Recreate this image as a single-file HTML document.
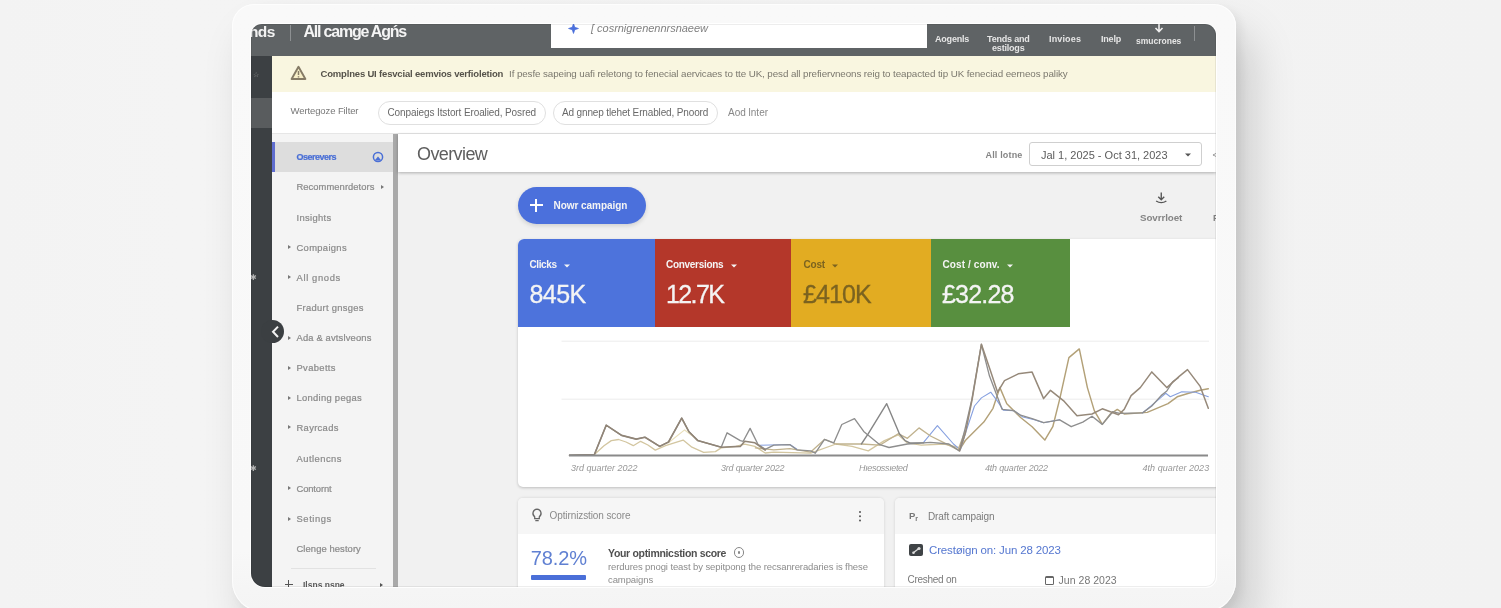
<!DOCTYPE html>
<html lang="en">
<head>
<meta charset="utf-8">
<title>Ads overview on tablet</title>
<style>
*{box-sizing:border-box;margin:0;padding:0}
html,body{width:1501px;height:608px;overflow:hidden}
body{position:relative;background:#f3f3f3;font-family:"Liberation Sans",sans-serif;color:#777;-webkit-font-smoothing:antialiased}
.abs{position:absolute}
.t{position:absolute;white-space:nowrap;line-height:1;transform:translateY(-50%)}
#bgl{left:0;top:0;width:1501px;height:608px;background:linear-gradient(90deg,#f3f3f3 0,#f4f4f4 12%,#f3f3f3 60%,#f2f2f2 100%)}
#frame{left:232px;top:4px;width:1004px;height:608px;border-radius:22px 22px 31px 31px;background:linear-gradient(180deg,#f9f9f9 0,#f8f8f8 90%,#f5f5f5 96%,#f4f4f4 100%);
 box-shadow:16px 30px 44px rgba(0,0,0,.17),5px 4px 10px rgba(0,0,0,.06),inset 0 0 0 1px rgba(255,255,255,.7)}
#screen{left:251px;top:24px;width:965px;height:563px;border-radius:11px 11px 10px 14px;overflow:hidden;background:#f1f1f1;box-shadow:0 0 0 1px rgba(255,255,255,.9)}
#screen::after{content:"";position:absolute;inset:0;border-radius:inherit;box-shadow:inset 0 0 0 1px rgba(0,0,0,.07);pointer-events:none}
#in{position:absolute;left:-251px;top:-24px;width:1501px;height:608px;filter:blur(.45px)}
/* top bar */
#top{left:251px;top:24px;width:965px;height:32px;background:#5f6365}
#search{left:551px;top:24px;width:376px;height:23.5px;background:#fff}
.nv{color:#e6e6e6;font-weight:bold;font-size:9px;text-align:center;letter-spacing:-.2px}
#rail{left:251px;top:56px;width:21px;height:531px;background:#3c4043}
#railsel{left:251px;top:98px;width:21px;height:30px;background:#595c5e}
#banner{left:272px;top:56px;width:944px;height:36px;background:#f9f6e0}
#filter{left:272px;top:92px;width:944px;height:42px;background:#fff;border-bottom:1px solid #e6e6e6}
.chip{position:absolute;top:101px;height:24px;border:1px solid #e0e0e0;border-radius:12px;background:#fff}
#nav{left:272px;top:134px;width:121px;height:453px;background:#f4f4f4}
#navsel{left:272px;top:142px;width:121px;height:30px;background:#dddddd;border-left:3px solid #5f6dcf}
#sep{left:392.5px;top:134px;width:5.5px;height:453px;background:#a9a9a9}
.ni{font-size:9.4px;color:#8b8b8b;left:296.5px;letter-spacing:-.1px;-webkit-text-stroke:.22px currentColor}
.ar{position:absolute;width:0;height:0;border-left:3.5px solid #777;border-top:2.5px solid transparent;border-bottom:2.5px solid transparent;transform:translateY(-50%)}
#head{left:398px;top:134px;width:818px;height:38px;background:#fff;box-shadow:0 1px 3px rgba(0,0,0,.28)}
#btn{left:517.5px;top:187px;width:128px;height:36.5px;border-radius:19px;background:#4b70dc;box-shadow:0 2px 4px rgba(60,64,67,.18)}
#card{left:517.5px;top:239px;width:702px;height:247.5px;background:#fff;border-radius:5px;box-shadow:0 1px 3px rgba(0,0,0,.22)}
.tile{position:absolute;top:239px;height:87.5px}
.tl{font-size:10px;font-weight:bold;color:#f4f4f4;letter-spacing:-.2px}
.tv{font-size:25px;color:#f4f4f4;letter-spacing:-.55px;-webkit-text-stroke:.3px currentColor}
.dn{position:absolute;width:0;height:0;border-top:3.5px solid #f4f4f4;border-left:3.5px solid transparent;border-right:3.5px solid transparent;transform:translate(-50%,-50%)}
.ax{font-size:9px;color:#979797;font-style:italic;letter-spacing:-.2px}
.bc{position:absolute;top:497.5px;height:100px;background:#fff;border-radius:5px;box-shadow:0 0 3px rgba(0,0,0,.14);overflow:hidden}
.bch{position:absolute;left:0;top:0;right:0;height:36px;background:#f6f6f6}
</style>
</head>
<body>
<div id="bgl" class="abs"></div>
<div id="frame" class="abs"></div>
<div id="screen" class="abs"><div id="in">

<!-- top bar -->
<div id="top" class="abs"></div>
<div class="t" style="left:249px;top:32px;font-size:15.5px;font-weight:bold;color:#f2f2f2;letter-spacing:-.6px">nds</div>
<div class="abs" style="left:290px;top:25px;width:1px;height:16px;background:#8d9092"></div>
<div class="t" id="ttl" style="left:303.5px;top:32.4px;font-size:16px;font-weight:bold;color:#f4f4f4;letter-spacing:-1.21px">All camge Agńs</div>
<div id="search" class="abs"></div>
<svg class="abs" style="left:568px;top:23.2px" width="11" height="11" viewBox="0 0 13 13"><path d="M6.5 0.6 L8 5 L12.4 6.5 L8 8 L6.5 12.4 L5 8 L0.6 6.5 L5 5 Z" fill="#4a6fdc" stroke="#4a6fdc" stroke-width=".8" stroke-linejoin="round"/></svg>
<div class="t" id="sx" style="left:591px;top:27.8px;font-size:11px;font-style:italic;color:#808080;letter-spacing:-.02px">[ cosrnigrenennrsnaeew</div>
<div class="t nv" style="left:935px;top:38.5px">Aogenls</div>
<div class="t nv" style="left:987px;top:43.5px;line-height:9.5px;transform:translateY(-50%)">Tends and<br>estilogs</div>
<div class="t nv" style="left:1049px;top:38.5px;letter-spacing:.15px">Invioes</div>
<div class="t nv" style="left:1101px;top:38.5px">Inelp</div>
<svg class="abs" style="left:1153px;top:22px" width="12" height="12" viewBox="0 0 12 12"><path d="M6 0 V9 M2.5 6 L6 9.5 L9.5 6" fill="none" stroke="#eee" stroke-width="1.6"/></svg>
<div class="t nv" style="left:1136px;top:41px;font-size:8.5px;letter-spacing:0">smucrones</div>
<div class="abs" style="left:1193.5px;top:26px;width:1px;height:15px;background:#8d9092"></div>

<!-- rail -->
<div id="rail" class="abs"></div>
<div id="railsel" class="abs"></div>
<div class="t" style="left:252.5px;top:74px;font-size:7px;color:#9a9a9a">☆</div>
<div class="t" style="left:249.5px;top:278px;font-size:8px;color:#b4b4b4">✱</div>
<div class="t" style="left:249.5px;top:469px;font-size:8px;color:#b4b4b4">✱</div>

<!-- banner -->
<div id="banner" class="abs"></div>
<svg class="abs" style="left:289.5px;top:65px" width="17" height="16" viewBox="0 0 17 16"><path d="M8.5 1.8 L15.4 14 H1.6 Z" fill="#f7efc8" stroke="#857b66" stroke-width="1.9" stroke-linejoin="round"/><path d="M8.5 6 V10 M8.5 11.2 V12.6" stroke="#857b66" stroke-width="1.5"/></svg>
<div class="t" id="bb" style="left:320.5px;top:73.5px;font-size:9.5px;font-weight:bold;color:#55524a;letter-spacing:-.18px">Complnes UI fesvcial eemvios verfioletion</div>
<div class="t" id="br" style="left:509px;top:73.5px;font-size:9.8px;color:#7b786e;letter-spacing:-.09px">If pesfe sapeing uafi reletong to fenecial aervicaes to tte UK, pesd all prefiervneons reig to teapacted tip UK feneciad eerneos paliky</div>

<!-- filter row -->
<div id="filter" class="abs"></div>
<div class="t" id="fl" style="left:290.5px;top:110.5px;font-size:9.5px;color:#777;letter-spacing:-.1px">Wertegoze Filter</div>
<div class="chip" style="left:377.5px;width:168.5px"></div>
<div class="t" id="c1" style="left:387.5px;top:113px;font-size:10px;color:#696969;letter-spacing:-.11px">Conpaiegs Itstort Eroalied, Posred</div>
<div class="chip" style="left:553px;width:165px"></div>
<div class="t" id="c2" style="left:562px;top:113px;font-size:10px;color:#696969;letter-spacing:-.14px">Ad gnnep tlehet Ernabled, Pnoord</div>
<div class="t" id="af" style="left:728px;top:112.5px;font-size:10px;color:#888">Aod lnter</div>

<!-- left nav -->
<div id="nav" class="abs"></div>
<div id="navsel" class="abs"></div>
<div id="sep" class="abs"></div>
<div class="t ni" id="n0" style="top:157px;color:#4a6fd6;font-weight:bold;font-size:9px;letter-spacing:-.49px">Oserevers</div>
<svg class="abs" style="left:372px;top:150.5px" width="12" height="12" viewBox="0 0 12 12"><circle cx="6" cy="6" r="4.6" fill="none" stroke="#4a6fd6" stroke-width="1.5"/><path d="M2.6 9.5 L6 5.4 L9.4 9.5 Z" fill="#4a6fd6"/></svg>
<div class="t ni" id="n1" style="top:187px;letter-spacing:0.058px">Recommenrdetors</div><div class="ar" style="left:381px;top:187px"></div>
<div class="t ni" id="n2" style="top:217.5px;letter-spacing:0.336px">Insights</div>
<div class="ar" style="left:287.5px;top:247px"></div><div class="t ni" id="n3" style="top:247.5px;letter-spacing:0.331px">Compaigns</div>
<div class="ar" style="left:287.5px;top:277px"></div><div class="t ni" id="n4" style="top:277.5px;letter-spacing:0.647px">All gnods</div>
<div class="t ni" id="n5" style="top:307.5px;letter-spacing:0.296px">Fradurt gnsges</div>
<div class="ar" style="left:287.5px;top:338px"></div><div class="t ni" id="n6" style="top:338px;letter-spacing:0.16px">Ada &amp; avtslveons</div>
<div class="ar" style="left:287.5px;top:367.5px"></div><div class="t ni" id="n7" style="top:367.5px;letter-spacing:0.364px">Pvabetts</div>
<div class="ar" style="left:287.5px;top:397.5px"></div><div class="t ni" id="n8" style="top:398px;letter-spacing:0.299px">Londing pegas</div>
<div class="ar" style="left:287.5px;top:427px"></div><div class="t ni" id="n9" style="top:427.5px;letter-spacing:0.324px">Rayrcads</div>
<div class="t ni" id="n10" style="top:458.5px;letter-spacing:0.47px">Autlencns</div>
<div class="ar" style="left:287.5px;top:488px"></div><div class="t ni" id="n11" style="top:488.5px;letter-spacing:-0.121px">Contornt</div>
<div class="ar" style="left:287.5px;top:518.5px"></div><div class="t ni" id="n12" style="top:519px;letter-spacing:0.588px">Setings</div>
<div class="t ni" id="n13" style="top:548.5px;letter-spacing:0.096px">Clenge hestory</div>
<div class="abs" style="left:291px;top:567.5px;width:85px;height:1px;background:#e2e2e2"></div>
<div class="abs" style="left:284.8px;top:583.8px;width:8px;height:1.3px;background:#555"></div>
<div class="abs" style="left:288.2px;top:580.4px;width:1.3px;height:8px;background:#555"></div>
<div class="t" style="left:303px;top:585px;font-size:8.5px;font-weight:bold;color:#5a5a5a">Ilsns nsne</div>
<div class="ar" style="left:380px;top:585px;border-left-color:#555"></div>
<!-- collapse handle -->
<div class="abs" style="left:261px;top:319.8px;width:23px;height:23px;border-radius:12px;background:#3b3f42"></div>
<svg class="abs" style="left:270px;top:325px" width="11" height="14" viewBox="0 0 11 14"><path d="M8 1.6 L3 6.8 L8 12" fill="none" stroke="#f2f2f2" stroke-width="2"/></svg>

<!-- header -->
<div id="head" class="abs"></div>
<div class="t" id="ov" style="left:417px;top:153.8px;font-size:18px;color:#5e5e5e;letter-spacing:-.6px">Overview</div>
<div class="t" id="at" style="left:985.5px;top:154.5px;font-size:9px;font-weight:bold;color:#858585;letter-spacing:.17px">All lotne</div>
<div class="abs" style="left:1028.5px;top:142px;width:173.5px;height:23.5px;border:1px solid #cfcfcf;border-radius:3px;background:#fff"></div>
<div class="t" id="dt" style="left:1041px;top:154.5px;font-size:11px;color:#5c5c5c">Jal 1, 2025 - Oct 31, 2023</div>
<div class="dn" style="left:1187.5px;top:154.5px;border-top-color:#555"></div>
<div class="t" style="left:1212.5px;top:154.5px;font-size:9px;color:#888">&lt;</div>

<!-- main -->
<div id="btn" class="abs"></div>
<div class="abs" style="left:530px;top:204.2px;width:12.5px;height:2px;background:#fff"></div>
<div class="abs" style="left:535.2px;top:199px;width:2px;height:12.5px;background:#fff"></div>
<div class="t" id="nc" style="left:553.5px;top:206px;font-size:10px;font-weight:bold;color:#f4f4f4;letter-spacing:-.05px">Nowr campaign</div>
<svg class="abs" style="left:1154.2px;top:192.3px" width="14.5" height="12.8" viewBox="0 0 17 15"><path d="M8.5 0.5 V8.5 M5 5.5 L8.5 9 L12 5.5" fill="none" stroke="#555" stroke-width="1.6"/><path d="M2.5 10.5 Q8.5 14.5 14.5 10.5" fill="none" stroke="#555" stroke-width="1.6"/></svg>
<div class="t" id="dl" style="left:1140px;top:218px;font-size:9.8px;font-weight:bold;color:#858585;letter-spacing:-.09px">Sovrrloet</div>
<div class="t" style="left:1213px;top:218px;font-size:9px;font-weight:bold;color:#808080">F</div>

<div id="card" class="abs"></div>
<div class="tile" style="left:517.5px;width:138px;background:#4d73dc;border-top-left-radius:6px"></div>
<div class="tile" style="left:655px;width:136.2px;background:#b4372a"></div>
<div class="tile" style="left:791px;width:140.4px;background:#e2ac22"></div>
<div class="tile" style="left:931.2px;width:138.8px;background:#588f3f"></div>
<div class="t tl" style="left:529.5px;top:265px;letter-spacing:-.4px">Clicks</div><div class="dn" style="left:566.5px;top:265.5px"></div>
<div class="t tv" id="v1" style="left:529.5px;top:294px">845K</div>
<div class="t tl" style="left:666px;top:265px;letter-spacing:-.3px">Conversions</div><div class="dn" style="left:733.5px;top:265.5px"></div>
<div class="t tv" id="v2" style="left:666px;top:294px;letter-spacing:-1.6px">12.7K</div>
<div class="t tl" style="left:803.5px;top:265px;color:#7b6320">Cost</div><div class="dn" style="left:834.5px;top:265.5px;border-top-color:#7b6320"></div>
<div class="t tv" id="v3" style="left:803px;top:294px;color:#7b6320;letter-spacing:-.9px">£410K</div>
<div class="t tl" style="left:942.5px;top:265px;letter-spacing:.1px">Cost / conv.</div><div class="dn" style="left:1010px;top:265.5px"></div>
<div class="t tv" id="v4" style="left:942px;top:294px;letter-spacing:-.8px">£32.28</div>

<!-- chart -->
<svg class="abs" style="left:0;top:0" width="1501" height="608" viewBox="0 0 1501 608">
<g stroke="#ececec" stroke-width="1"><path d="M561.5 341.2 H1209 M561.5 399.2 H1209"/></g>
<g fill="none" stroke-linejoin="round" stroke-linecap="round" id="lines">
<polyline points="668.5,442.8 684.6,429.9 691.9,435.4 697.8,440.6" stroke="#e9dfba" stroke-width="1.2"/>
<polyline points="594.4,454.5 604.0,445.7 611.3,440.6 618.6,439.5 626.0,442.0 633.3,445.7 640.6,441.3 647.9,445.0 655.3,450.1 665.5,445.7 674.3,442.8 683.1,440.1 691.9,447.2 703.6,452.3 715.4,451.6 721.2,447.9 735.9,446.4 744.7,444.2 754.9,446.4 765.2,453.0 773.8,452.1 810.7,453.2 836.0,444.0 852.1,446.3 868.3,450.9 884.4,440.6 898.2,434.8 907.4,442.9 921.3,445.2 944.3,444.0 958.1,447.5" stroke="#d3c6a0" stroke-width="1.3"/>
<polyline points="959.6,449.7 965.3,440.5 983.8,422.1 993.0,408.3 999.9,387.6 1006.8,403.7 1020.6,417.5 1032.1,426.7 1044.8,440.1 1052.8,426.7 1059.7,399.1 1068.9,357.6 1079.3,348.9 1087.4,387.6 1094.3,410.6 1102.3,424.4 1110.4,414.0 1117.3,409.4 1124.2,414.0 1147.2,412.4 1168.0,403.7 1177.2,396.8 1188.7,393.3 1200.2,390.3 1208.3,388.7" stroke="#b3a178" stroke-width="1.45"/>
<polyline points="760.0,445.2 789.9,444.5 796.9,449.3" stroke="#86a0e0" stroke-width="1.1"/>
<polyline points="923.6,442.4 937.4,425.6 953.5,444.0 960.4,449.8 965.3,433.6 974.5,406.0 981.4,397.9 990.7,392.2 997.6,401.4 1003.3,410.1 1013.7,410.6 1022.9,417.0 1034.4,419.8 1043.6,422.8 1059.7,419.8" stroke="#86a0e0" stroke-width="1.1"/>
<polyline points="1142.6,412.9 1156.4,401.4 1165.7,393.3 1170.3,396.8 1181.8,391.7 1195.6,392.2 1208.3,396.8" stroke="#86a0e0" stroke-width="1.1"/>
<polyline points="755.4,447.9 773.8,449.8 789.9,448.6 810.7,452.1 824.5,439.4 836.0,444.0 861.4,444.0 879.8,445.2 898.2,433.7 907.4,438.3 919.0,427.9 930.5,436.0 944.3,442.9 958.1,449.8 965.0,431.4" stroke="#c0b28e" stroke-width="1.3"/>
<polyline points="569.5,455.2 594.4,454.5 606.2,425.2 621.6,435.4 636.2,439.1 645.0,437.2 659.7,446.4 668.5,442.0 681.7,418.1 689.0,431.8 697.8,440.6 721.2,447.2 727.1,432.8 740.3,440.6 743.2,441.3 750.1,428.4 757.9,444.2 765.2,449.4 773.8,445.2 789.9,444.7 796.9,449.8 810.7,450.9 815.3,453.2 824.5,439.4 833.7,442.9 841.8,424.5 854.5,418.7 863.7,431.4 879.8,444.7 889.0,447.5 907.4,444.0 930.5,442.4 948.9,444.0 959.3,450.9 965.0,429.1 971.9,399.1 981.4,344.3 989.5,376.1 1002.2,409.4 1013.7,410.6 1020.6,415.2 1032.1,418.7 1043.6,422.6 1059.7,419.8 1071.2,426.7 1082.8,422.1 1092.0,416.3 1102.3,424.4 1112.7,411.7 1119.6,413.4 1142.6,412.9 1151.8,406.0 1161.1,395.6 1166.8,391.0 1172.6,381.8 1178.3,377.7" stroke="#8e8e8e" stroke-width="1.35"/>
<polyline points="861.4,444.0 868.3,433.7 886.7,403.7 899.4,433.7 905.1,440.6 909.7,442.9 923.6,442.9" stroke="#868686" stroke-width="1.4"/>
<polyline points="569.5,455.2 594.4,454.5 606.2,425.2 621.6,435.4 636.2,439.1 645.0,437.2 659.7,446.4 668.5,442.0 681.7,418.1 689.0,431.8 697.8,440.6 721.2,447.2 740.3,446.4 744.7,441.3 754.9,442.8 765.2,450.1" stroke="#918577" stroke-width="1.6"/>
<polyline points="959.6,450.9 965.3,433.6 972.2,399.1 981.4,344.3 990.7,371.4 997.6,392.2 1004.5,380.7 1018.3,373.8 1032.1,372.1 1043.6,398.6 1050.5,390.3 1064.3,401.4 1077.0,415.7 1092.0,414.0 1102.3,408.8 1110.4,411.7 1118.5,414.7 1124.2,409.4 1131.1,395.6 1140.3,387.6 1151.8,371.9 1166.8,387.6 1179.5,376.1 1187.5,369.6 1200.2,386.4 1208.3,408.3" stroke="#96897a" stroke-width="1.5"/>
</g>
<path d="M569 455.5 H1208" stroke="#8a8a8a" stroke-width="2"/>
</svg>
<div class="t ax" id="a1" style="left:571px;top:468px;letter-spacing:0">3rd quarter 2022</div>
<div class="t ax" id="a2" style="left:721px;top:468px">3rd quarter 2022</div>
<div class="t ax" id="a3" style="left:859px;top:468px;letter-spacing:-.34px">Hıesossıeted</div>
<div class="t ax" id="a4" style="left:985px;top:468px">4th quarter 2022</div>
<div class="t ax" id="a5" style="left:1142.5px;top:468px;letter-spacing:.04px">4th quarter 2023</div>

<!-- bottom cards -->
<div class="bc" style="left:518px;width:366px"><div class="bch"></div></div>
<div class="bc" style="left:895px;width:330px"><div class="bch"></div></div>
<svg class="abs" style="left:531px;top:508px" width="12" height="15" viewBox="0 0 12 15"><path d="M6 1.2 A4.2 4.2 0 0 1 8.3 8.8 V10.6 H3.7 V8.8 A4.2 4.2 0 0 1 6 1.2 Z" fill="none" stroke="#666" stroke-width="1.3"/><path d="M4.3 12.6 H7.7" stroke="#666" stroke-width="1.3"/></svg>
<div class="t" id="os" style="left:549.5px;top:515.5px;font-size:10px;color:#8a8a8a;letter-spacing:-.1px">Optirnizstion score</div>
<div class="abs" style="left:858.8px;top:510.5px;width:2.6px;height:2.6px;border-radius:2px;background:#555;box-shadow:0 4.2px 0 #555,0 8.4px 0 #555"></div>
<div class="t" id="pc" style="left:530.8px;top:557.8px;font-size:20px;color:#6080d2;letter-spacing:-.1px">78.2%</div>
<div class="abs" style="left:530.5px;top:575px;width:55.5px;height:4.5px;background:#4a6fd8;border-radius:1px"></div>
<div class="t" id="yo" style="left:608px;top:552.7px;font-size:10.5px;font-weight:bold;color:#505050;letter-spacing:-.32px">Your optimnicstion score</div>
<div class="abs" style="left:733.5px;top:547px;width:10.5px;height:10.5px;border:1px solid #888;border-radius:6px"></div>
<div class="abs" style="left:737.5px;top:551px;width:2.5px;height:2.5px;background:#888;border-radius:2px"></div>
<div class="t" id="d1" style="left:608px;top:566.9px;font-size:9.5px;color:#8c8c8c;letter-spacing:-.1px">rerdures pnogi teast by sepitpong the recsanreradaries is fhese</div>
<div class="t" id="d2" style="left:608px;top:579.5px;font-size:9.5px;color:#8c8c8c;letter-spacing:-.1px">campaigns</div>

<div class="t" style="left:909px;top:516px;font-size:9.5px;font-weight:bold;color:#777">P<span style="font-size:7px;vertical-align:-2px">r</span></div>
<div class="t" id="dc" style="left:928px;top:516.5px;font-size:10px;color:#7a7a7a;letter-spacing:-.1px">Draft campaign</div>
<div class="abs" style="left:908.5px;top:543.5px;width:14.5px;height:12.5px;border-radius:2px;background:#3f4346"></div>
<svg class="abs" style="left:908.5px;top:543.5px" width="15" height="13" viewBox="0 0 15 13"><path d="M4 9 L10.5 4" stroke="#ddd" stroke-width="1.4"/><circle cx="10" cy="4.5" r="1.6" fill="#ddd"/><circle cx="4.5" cy="8.8" r="1.3" fill="#ddd"/></svg>
<div class="t" id="lk" style="left:929px;top:550.5px;font-size:11.5px;color:#5577d0;letter-spacing:-.15px">Crestøign on: Jun 28 2023</div>
<div class="t" id="co" style="left:907.5px;top:580px;font-size:10px;color:#7a7a7a;letter-spacing:-.27px">Creshed on</div>
<div class="abs" style="left:1045px;top:575.5px;width:8.5px;height:9.5px;border:1.2px solid #666;border-top-width:2.4px;border-radius:1.5px"></div>
<div class="t" id="jd" style="left:1058.5px;top:580px;font-size:10.5px;color:#777;letter-spacing:.04px">Jun 28 2023</div>

</div></div>
</body>
</html>
